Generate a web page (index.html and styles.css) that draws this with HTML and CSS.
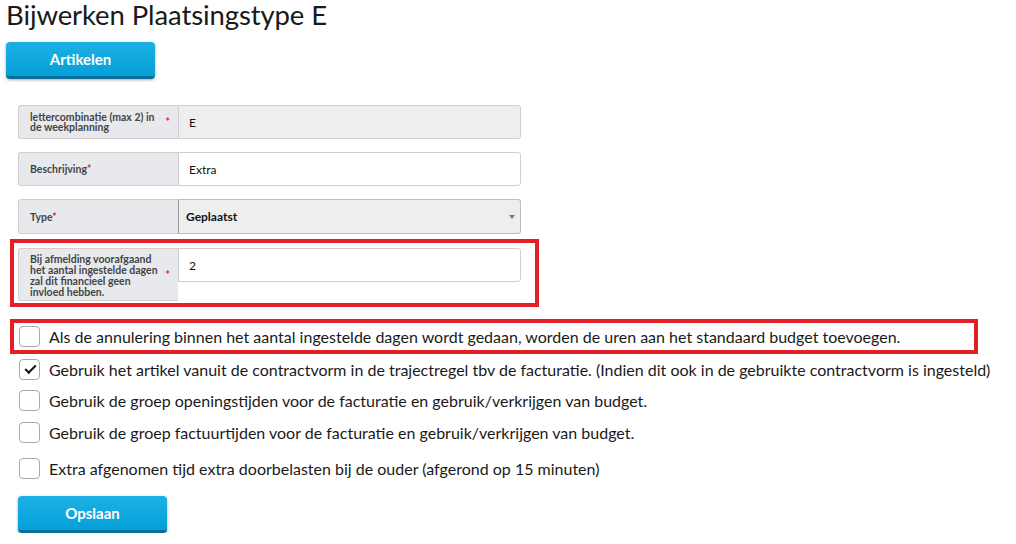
FILE: index.html
```html
<!DOCTYPE html>
<html lang="nl">
<head>
    <meta charset="UTF-8">
    <title>Bijwerken Plaatsingstype E</title>
    <link rel="stylesheet" href="styles.css">
</head>
<body>
    <h1>Bijwerken Plaatsingstype E</h1>
    <button class="btn btn-top">Artikelen</button>

    <form class="form">
        <div class="field">
            <div class="field-label">
                <span>lettercombinatie (max 2) in de weekplanning</span>
                <span class="req req-side">*</span>
            </div>
            <div class="field-input disabled">E</div>
        </div>

        <div class="field">
            <div class="field-label">
                <span>Beschrijving<span class="req">*</span></span>
            </div>
            <div class="field-input">Extra</div>
        </div>

        <div class="field">
            <div class="field-label">
                <span>Type<span class="req">*</span></span>
            </div>
            <div class="field-input select">Geplaatst<span class="caret"></span></div>
        </div>

        <div class="highlight highlight-field">
            <div class="field tall">
                <div class="field-label">
                    <span>Bij afmelding voorafgaand het aantal ingestelde dagen zal dit financieel geen invloed hebben.</span>
                    <span class="req req-side">*</span>
                </div>
                <div class="field-input">2</div>
            </div>
        </div>

        <div class="checks">
            <div class="highlight highlight-check">
                <label class="check"><span class="box"></span>Als de annulering binnen het aantal ingestelde dagen wordt gedaan, worden de uren aan het standaard budget toevoegen.</label>
            </div>
            <label class="check first"><span class="box checked"></span>Gebruik het artikel vanuit de contractvorm in de trajectregel tbv de facturatie. (Indien dit ook in de gebruikte contractvorm is ingesteld)</label>
            <label class="check"><span class="box"></span>Gebruik de groep openingstijden voor de facturatie en gebruik/verkrijgen van budget.</label>
            <label class="check"><span class="box"></span>Gebruik de groep factuurtijden voor de facturatie en gebruik/verkrijgen van budget.</label>
            <label class="check last"><span class="box"></span>Extra afgenomen tijd extra doorbelasten bij de ouder (afgerond op 15 minuten)</label>
        </div>

        <button type="button" class="btn btn-save">Opslaan</button>
    </form>
</body>
</html>
```

FILE: styles.css
```css
* {
    box-sizing: border-box;
}

body {
    margin: 0;
    padding: 0 6px;
    background: #fff;
    color: #222;
    font-family: Lato, "Liberation Sans", sans-serif;
}

h1 {
    margin: 0;
    font-size: 27.5px;
    font-weight: normal;
    line-height: 30px;
    color: #1a1a1a;
    letter-spacing: -0.1px;
}

.btn {
    display: block;
    width: 149px;
    height: 37px;
    border: none;
    border-bottom: 3px solid #0a6d97;
    border-radius: 4px;
    background: linear-gradient(#1eb0e4, #03a0d8);
    color: #fff;
    font-family: inherit;
    font-size: 15px;
    font-weight: bold;
    box-shadow: 0 1px 3px rgba(0, 0, 0, 0.35);
    cursor: pointer;
}

.btn-top {
    margin-top: 12px;
}

.form {
    margin-top: 26px;
    padding-left: 12px;
}

.field {
    display: flex;
    width: 503px;
    margin-bottom: 13px;
    font-size: 12px;
}

.field-label {
    display: flex;
    align-items: center;
    width: 160px;
    min-height: 34px;
    padding: 0 8px 0 11px;
    background: #e7e9ed;
    border: 1px solid #cfcfcf;
    border-right: none;
    border-radius: 3px 0 0 3px;
    color: #444;
    font-size: 10.5px;
    font-weight: bold;
    line-height: 10px;
}

.field-label span:first-child {
    flex: 1;
}

.req {
    color: #e0191f;
}

.req-side {
    flex: none;
    margin-left: 4px;
}

.field-input {
    display: flex;
    align-items: center;
    flex: 1;
    height: 34px;
    padding: 0 10px;
    border: 1px solid #cfcfcf;
    border-radius: 0 3px 3px 0;
    background: #fff;
    color: #111;
    font-size: 12px;
}

.field-input.disabled {
    background: #eeeeee;
}

.field-input.select {
    position: relative;
    height: 35px;
    padding-left: 7px;
    background: #eeeeee;
    border-color: #bdbdbd;
    border-left-color: #999;
    font-weight: bold;
}

.caret {
    position: absolute;
    right: 5px;
    top: 15px;
    border-left: 3px solid transparent;
    border-right: 3px solid transparent;
    border-top: 4px solid #777;
}

.field.tall {
    align-items: flex-start;
    margin-bottom: 0;
}

.field.tall .field-label {
    min-height: 53px;
    padding-top: 2px;
    line-height: 11px;
}

.highlight {
    border: 4px solid #e41e26;
}

.highlight-field {
    width: 529px;
    margin: -8px 0 0 -8px;
    padding: 5px 0 2px 4px;
}

.checks {
    margin-top: 12px;
    margin-left: -8px;
}

.highlight-check {
    width: 968px;
    padding: 0 0 0 5px;
}

.check {
    display: flex;
    align-items: center;
    height: 32px;
    padding-left: 9px;
    font-size: 16px;
    color: #1a1a1a;
    white-space: nowrap;
}

.highlight-check .check {
    height: 27px;
    padding-left: 0;
}

.check.first {
    height: 30px;
}

.check.last {
    height: 36px;
    margin-top: 2px;
}

.box {
    flex: none;
    position: relative;
    width: 21px;
    height: 21px;
    margin-right: 9px;
    border: 1px solid #a9a9a9;
    border-radius: 4px;
    background: #fff;
}

.box.checked::after {
    content: '';
    position: absolute;
    left: 5px;
    top: 5px;
    width: 9px;
    height: 4px;
    border-left: 2.5px solid #111;
    border-bottom: 2.5px solid #111;
    transform: rotate(-45deg);
}

.btn-save {
    margin-top: 10px;
}
```
